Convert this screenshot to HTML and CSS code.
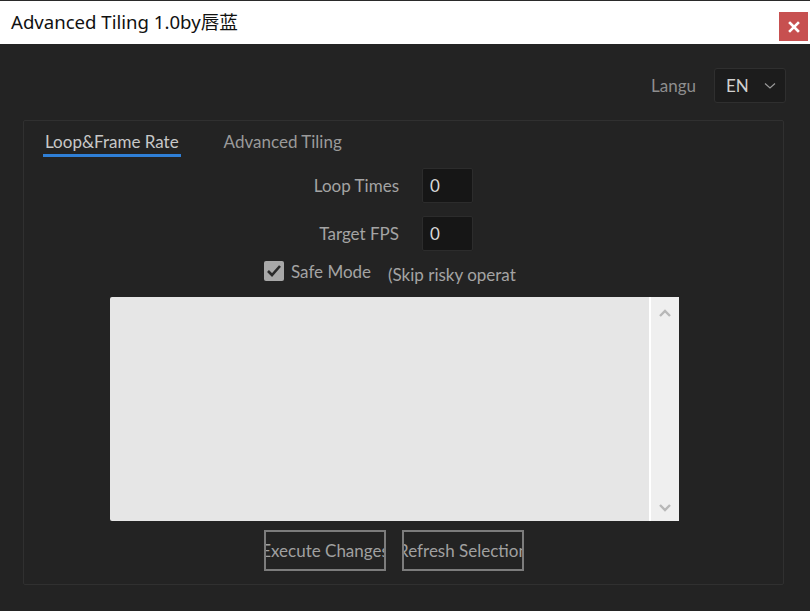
FILE: index.html
```html
<!DOCTYPE html>
<html>
<head>
<meta charset="utf-8">
<link rel="stylesheet" href="styles.css">
</head>
<body>
<div class="window">
  <div class="titlebar">
    <div class="title">Advanced Tiling 1.0by唇蓝</div>
    <div class="close">
      <svg width="12" height="12" viewBox="0 0 12 12"><path d="M2 2 L10 10 M10 2 L2 10" stroke="#fff" stroke-width="2.6" stroke-linecap="square"/></svg>
    </div>
  </div>
  <div class="content">
    <div class="lang-row">
      <span class="lang-label">Langu</span>
      <div class="select">
        <span>EN</span>
        <svg width="12" height="8" viewBox="0 0 12 8"><path d="M1 1.5 L6 6 L11 1.5" fill="none" stroke="#9a9a9a" stroke-width="1.2"/></svg>
      </div>
    </div>
    <div class="panel">
      <div class="tabs">
        <div class="tab active">Loop&amp;Frame Rate</div>
        <div class="tab">Advanced Tiling</div>
      </div>
      <div class="form">
        <div class="field">
          <span class="label">Loop Times</span>
          <div class="input">0</div>
        </div>
        <div class="field">
          <span class="label">Target FPS</span>
          <div class="input">0</div>
        </div>
        <div class="check-row">
          <div class="checkbox">
            <svg width="16" height="14" viewBox="0 0 16 14"><path d="M2 7 L6 11 L14 2" fill="none" stroke="#2a2a2a" stroke-width="2.6"/></svg>
          </div>
          <span class="check-label">Safe Mode</span>
          <span class="hint">(Skip risky operat</span>
        </div>
      </div>
      <div class="textarea">
        <div class="text"></div>
        <div class="scrollbar">
          <svg width="14" height="10" viewBox="0 0 14 10"><path d="M2 8 L7 3 L12 8" fill="none" stroke="#b8b8b8" stroke-width="2.4"/></svg>
          <svg width="14" height="10" viewBox="0 0 14 10"><path d="M2 2 L7 7 L12 2" fill="none" stroke="#b8b8b8" stroke-width="2.4"/></svg>
        </div>
      </div>
      <div class="buttons">
        <div class="btn"><span>Execute Changes</span></div>
        <div class="btn"><span>Refresh Selection</span></div>
      </div>
    </div>
  </div>
</div>
</body>
</html>
```

FILE: styles.css
```css
html, body {
  margin: 0;
  padding: 0;
}
body {
  width: 810px;
  height: 611px;
  background: #232323;
  overflow: hidden;
  font-family: Lato, "Open Sans", sans-serif;
}
.window {
  width: 810px;
  height: 611px;
  display: flex;
  flex-direction: column;
}
.titlebar {
  height: 44px;
  background: #ffffff;
  border-top: 1px solid #2a2a2a;
  box-sizing: border-box;
  display: flex;
  align-items: center;
  justify-content: space-between;
  padding-left: 11px;
  padding-right: 2px;
}
.title {
  font-family: "Noto Sans", "Noto Sans CJK SC", sans-serif;
  font-size: 18.6px;
  color: #111;
  margin-top: -4px;
}
.close {
  width: 29px;
  height: 29px;
  background: #c75050;
  display: flex;
  align-items: center;
  justify-content: center;
  margin-top: 8px;
}
.content {
  flex: 1;
  display: flex;
  flex-direction: column;
}
.lang-row {
  display: flex;
  justify-content: flex-end;
  align-items: center;
  margin-top: 24px;
  padding-right: 24px;
  height: 35px;
}
.lang-label {
  color: #8e8e8e;
  font-size: 17px;
  margin-right: 18px;
}
.select {
  width: 72px;
  height: 35px;
  box-sizing: border-box;
  background: #1c1c1c;
  border: 1px solid #2f2f2f;
  border-radius: 3px;
  display: flex;
  align-items: center;
  justify-content: space-between;
  padding: 0 9px 0 11px;
  color: #d0d0d0;
  font-size: 17px;
}
.panel {
  margin: 17px 26px 0 23px;
  height: 465px;
  box-sizing: border-box;
  border: 1px solid #303030;
  border-radius: 2px;
  display: flex;
  flex-direction: column;
}
.tabs {
  display: flex;
  padding-left: 19px;
  margin-top: 10px;
  gap: 41px;
}
.tab {
  font-size: 17px;
  color: #9a9a9a;
  padding: 0 2px;
  height: 26px;
  line-height: 22px;
  box-sizing: border-box;
}
.tab.active {
  color: #c8c8c8;
  border-bottom: 3px solid #2f7fd6;
}
.form {
  display: flex;
  flex-direction: column;
  margin-top: 11px;
}
.field {
  display: flex;
  align-items: center;
  height: 35px;
  margin-bottom: 13px;
}
.label {
  width: 375px;
  text-align: right;
  color: #a4a4a4;
  font-size: 17px;
  margin-right: 23px;
}
.input {
  width: 51px;
  height: 35px;
  box-sizing: border-box;
  background: #161616;
  border: 1px solid #2c2c2c;
  border-radius: 2px;
  color: #d8d8d8;
  font-size: 17px;
  padding-left: 7px;
  display: flex;
  align-items: center;
}
.check-row {
  display: flex;
  align-items: center;
  margin-top: -5px;
  margin-left: 240px;
  height: 24px;
}
.checkbox {
  width: 20px;
  height: 20px;
  background: #a8a8a8;
  border-radius: 2px;
  display: flex;
  align-items: center;
  justify-content: center;
}
.check-label {
  color: #a4a4a4;
  font-size: 17px;
  margin-left: 7px;
  width: 97px;
}
.hint {
  color: #a4a4a4;
  font-size: 17px;
  margin-top: 7px;
  white-space: nowrap;
}
.textarea {
  margin-left: 86px;
  margin-top: 14px;
  width: 569px;
  height: 224px;
  background: #e6e6e6;
  border-radius: 2px;
  display: flex;
}
.text {
  flex: 1;
}
.scrollbar {
  width: 28px;
  background: #efefef;
  border-left: 2px solid #ffffff;
  display: flex;
  flex-direction: column;
  justify-content: space-between;
  align-items: center;
  padding: 11px 0 8px;
}
.buttons {
  display: flex;
  gap: 16px;
  margin-left: 240px;
  margin-top: 9px;
}
.btn {
  width: 122px;
  height: 41px;
  box-sizing: border-box;
  border: 2px solid #7c7c7c;
  display: flex;
  align-items: center;
  justify-content: center;
  overflow: hidden;
  color: #a0a0a0;
  font-size: 17px;
}
.btn span {
  white-space: nowrap;
  flex-shrink: 0;
}
```
